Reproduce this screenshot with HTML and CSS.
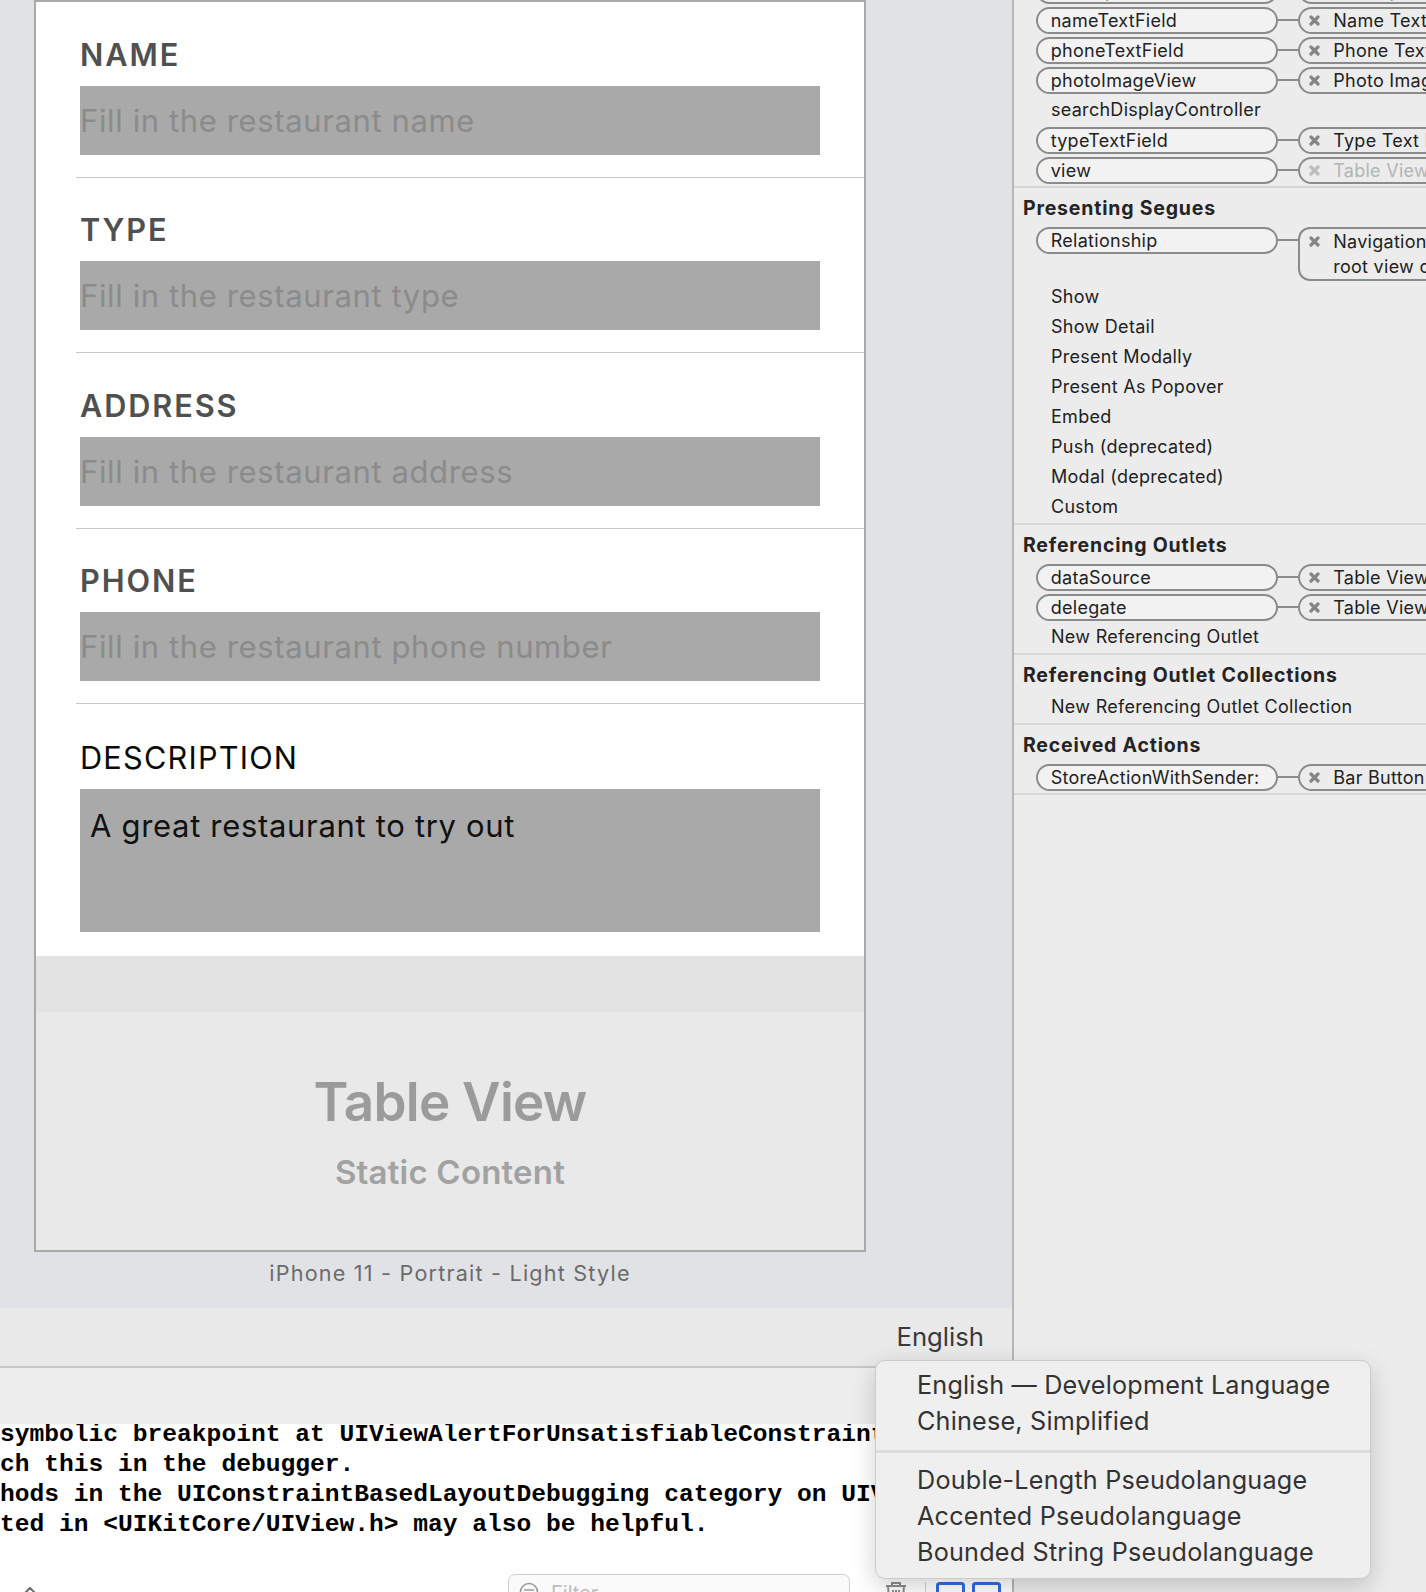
FILE: index.html
```html
<!DOCTYPE html>
<html lang="en">
<head>
<meta charset="utf-8">
<title>Storyboard</title>
<link rel="stylesheet" href="styles.css">
</head>
<body>
<div class="app">
  <div class="editor">
    <div class="canvas">
      <div class="device">
        <div class="form">
          <div class="row">
            <div class="label">NAME</div>
            <div class="field">Fill in the restaurant name</div>
          </div>
          <div class="row">
            <div class="label">TYPE</div>
            <div class="field">Fill in the restaurant type</div>
          </div>
          <div class="row">
            <div class="label">ADDRESS</div>
            <div class="field">Fill in the restaurant address</div>
          </div>
          <div class="row">
            <div class="label">PHONE</div>
            <div class="field">Fill in the restaurant phone number</div>
          </div>
          <div class="row row-desc">
            <div class="label label-dark">DESCRIPTION</div>
            <div class="field field-desc">A great restaurant to try out</div>
          </div>
        </div>
        <div class="band"></div>
        <div class="placeholder">
          <div class="ph-title">Table View</div>
          <div class="ph-sub">Static Content</div>
        </div>
      </div>
      <div class="caption">iPhone 11 - Portrait - Light Style</div>
    </div>
    <div class="langbar"><span class="lang">English</span></div>
    <div class="debugbar"></div>
    <div class="console">
      <pre class="log">symbolic breakpoint at UIViewAlertForUnsatisfiableConstraints to
ch this in the debugger.
hods in the UIConstraintBasedLayoutDebugging category on UIView
ted in &lt;UIKitCore/UIView.h&gt; may also be helpful.</pre>
      <div class="console-bar">
        <svg class="ic-chevron" width="16" height="12" viewBox="0 0 16 12"><path d="M2 9 L8 3 L14 9" fill="none" stroke="#6d6d6d" stroke-width="2" stroke-linecap="round" stroke-linejoin="round"/></svg>
        <div class="filter">
          <svg width="20" height="20" viewBox="0 0 20 20"><circle cx="10" cy="10" r="8.5" fill="none" stroke="#9a9a9a" stroke-width="1.6"/><path d="M5.5 8h9M7 11h6M8.5 14h3" stroke="#9a9a9a" stroke-width="1.6" stroke-linecap="round"/></svg>
          <span class="filter-text">Filter</span>
        </div>
        <svg class="ic-trash" width="26" height="26" viewBox="0 0 26 26" fill="none" stroke="#8d8d8d" stroke-width="2"><path d="M9 4V2h8v2"/><path d="M3 5h20"/><path d="M5 5l1.5 19h13L21 5"/><path d="M10 9v12M13 9v12M16 9v12"/></svg>
        <span class="bar-sep"></span>
        <svg class="ic-split" width="29" height="29" viewBox="0 0 29 29"><rect x="1.5" y="1.5" width="26" height="26" rx="2" fill="#fff" stroke="#2f6be0" stroke-width="3"/></svg>
        <svg class="ic-split2" width="29" height="29" viewBox="0 0 29 29"><rect x="1.5" y="1.5" width="26" height="26" rx="2" fill="#fff" stroke="#2f6be0" stroke-width="3"/></svg>
      </div>
    </div>
  </div>

  <aside class="inspector">
    <div class="outlets">
      <section class="section">
        <div class="conn"><span class="pill">descriptionTextView</span><span class="wire"></span><span class="target"><svg class="x" width="11" height="11" viewBox="0 0 11 11"><path d="M2 2L9 9M9 2L2 9"/></svg><span>Description Text View</span></span></div>
        <div class="conn"><span class="pill">nameTextField</span><span class="wire"></span><span class="target"><svg class="x" width="11" height="11" viewBox="0 0 11 11"><path d="M2 2L9 9M9 2L2 9"/></svg><span>Name Text Field</span></span></div>
        <div class="conn"><span class="pill">phoneTextField</span><span class="wire"></span><span class="target"><svg class="x" width="11" height="11" viewBox="0 0 11 11"><path d="M2 2L9 9M9 2L2 9"/></svg><span>Phone Text Field</span></span></div>
        <div class="conn"><span class="pill">photoImageView</span><span class="wire"></span><span class="target"><svg class="x" width="11" height="11" viewBox="0 0 11 11"><path d="M2 2L9 9M9 2L2 9"/></svg><span>Photo Image View</span></span></div>
        <div class="item">searchDisplayController</div>
        <div class="conn"><span class="pill">typeTextField</span><span class="wire"></span><span class="target"><svg class="x" width="11" height="11" viewBox="0 0 11 11"><path d="M2 2L9 9M9 2L2 9"/></svg><span>Type Text Field</span></span></div>
        <div class="conn"><span class="pill">view</span><span class="wire"></span><span class="target target-off"><svg class="x" width="11" height="11" viewBox="0 0 11 11"><path d="M2 2L9 9M9 2L2 9"/></svg><span>Table View</span></span></div>
      </section>

      <section class="section">
        <h3 class="sec-title">Presenting Segues</h3>
        <div class="conn"><span class="pill">Relationship</span><span class="wire"></span><span class="target target-tall"><svg class="x" width="11" height="11" viewBox="0 0 11 11"><path d="M2 2L9 9M9 2L2 9"/></svg><span class="tall-text"><span>Navigation Controller</span><span>root view controller</span></span></span></div>
        <div class="item">Show</div>
        <div class="item">Show Detail</div>
        <div class="item">Present Modally</div>
        <div class="item">Present As Popover</div>
        <div class="item">Embed</div>
        <div class="item">Push (deprecated)</div>
        <div class="item">Modal (deprecated)</div>
        <div class="item">Custom</div>
      </section>

      <section class="section">
        <h3 class="sec-title">Referencing Outlets</h3>
        <div class="conn"><span class="pill">dataSource</span><span class="wire"></span><span class="target"><svg class="x" width="11" height="11" viewBox="0 0 11 11"><path d="M2 2L9 9M9 2L2 9"/></svg><span>Table View</span></span></div>
        <div class="conn"><span class="pill">delegate</span><span class="wire"></span><span class="target"><svg class="x" width="11" height="11" viewBox="0 0 11 11"><path d="M2 2L9 9M9 2L2 9"/></svg><span>Table View</span></span></div>
        <div class="item">New Referencing Outlet</div>
      </section>

      <section class="section">
        <h3 class="sec-title">Referencing Outlet Collections</h3>
        <div class="item">New Referencing Outlet Collection</div>
      </section>

      <section class="section">
        <h3 class="sec-title">Received Actions</h3>
        <div class="conn"><span class="pill">StoreActionWithSender:</span><span class="wire"></span><span class="target"><svg class="x" width="11" height="11" viewBox="0 0 11 11"><path d="M2 2L9 9M9 2L2 9"/></svg><span>Bar Button Item</span></span></div>
      </section>
    </div>
  </aside>
</div>

<div class="menu">
  <div class="menu-item">English — Development Language</div>
  <div class="menu-item">Chinese, Simplified</div>
  <div class="menu-sep"></div>
  <div class="menu-item">Double-Length Pseudolanguage</div>
  <div class="menu-item">Accented Pseudolanguage</div>
  <div class="menu-item">Bounded String Pseudolanguage</div>
</div>
</body>
</html>
```

FILE: styles.css
```css
* { box-sizing: border-box; margin: 0; padding: 0; }
html, body { width: 1426px; height: 1592px; overflow: hidden; }
body {
  font-family: Inter, "Noto Sans", sans-serif;
  background: #ececec;
  position: relative;
  color: #222;
}

.app { display: flex; height: 1592px; }

/* ---------- editor (left) ---------- */
.editor {
  width: 1012px;
  flex: none;
  display: flex;
  flex-direction: column;
  overflow: hidden;
}
.canvas {
  height: 1308px;
  flex: none;
  background: #e1e2e6;
  padding-left: 34px;
}
.device {
  width: 832px;
  border: 2px solid #a9a9a9;
  background: #e9e9e9;
}
.form { background: #fff; }
.row {
  margin-left: 40px;
  height: 175.5px;
  padding: 32.5px 0 0 4px;
  border-bottom: 1px solid #c8c8c8;
}
.label {
  font-size: 30.7px;
  font-weight: 600;
  letter-spacing: 1.9px;
  line-height: 40px;
  height: 40px;
  color: #505050;
}
.label-dark {
  color: #0a0a0a;
  font-weight: 400;
  letter-spacing: 1.2px;
}
.field {
  width: 740px;
  height: 69px;
  margin-top: 11px;
  background: #a9a9a9;
  font-size: 31px;
  letter-spacing: 0.62px;
  line-height: 69px;
  color: #8b8b8b;
  white-space: nowrap;
}
.row-desc {
  height: 252px;
  padding-top: 34px;
  border-bottom: none;
}
.field-desc {
  height: 143px;
  padding: 17px 0 0 10px;
  line-height: 40px;
  letter-spacing: 0.68px;
  color: #111;
}
.band { height: 56px; background: #e3e3e3; }
.placeholder {
  height: 238px;
  background: #e9e9e9;
  display: flex;
  flex-direction: column;
  align-items: center;
  padding-top: 60px;
}
.ph-title {
  font-size: 53px;
  line-height: 60px;
  font-weight: 600;
  letter-spacing: -0.75px;
  color: #9b9b9b;
}
.ph-sub {
  font-size: 33px;
  line-height: 40px;
  font-weight: 600;
  letter-spacing: 0.2px;
  color: #a2a2a2;
  margin-top: 20px;
}
.caption {
  width: 832px;
  text-align: center;
  font-size: 21.6px;
  letter-spacing: 1.2px;
  line-height: 30px;
  margin-top: 6px;
  color: #6b6b6b;
}

.langbar {
  height: 60px;
  flex: none;
  background: #e9e9e9;
  border-bottom: 2px solid #c6c6c6;
  display: flex;
  justify-content: flex-end;
  align-items: center;
  padding-right: 28px;
}
.lang { font-size: 25.7px; line-height: 30px; color: #3a3a3a; }
.debugbar { height: 56px; flex: none; background: #ededed; }

.console { flex: 1; background: #fff; overflow: hidden; }
.log {
  margin-top: -4px;
  font-family: "Liberation Mono", monospace;
  font-weight: 700;
  font-size: 24.6px;
  line-height: 30px;
  white-space: pre;
  color: #000;
}
.console-bar {
  display: flex;
  align-items: flex-start;
  height: 40px;
  margin-top: 34px;
}
.ic-chevron { margin: 11px 0 0 22px; flex: none; }
.filter {
  margin-left: 470px;
  width: 342px;
  height: 32px;
  flex: none;
  border: 1px solid #d0d0d0;
  border-radius: 7px;
  background: #fafafa;
  display: flex;
  align-items: flex-start;
  padding: 7px 0 0 10px;
  gap: 12px;
}
.filter-text { font-size: 20px; line-height: 22px; color: #bdbdbd; }
.ic-trash { margin: 7px 0 0 33px; flex: none; }
.bar-sep { width: 1px; height: 24px; background: #cfcfcf; margin: 8px 0 0 16px; flex: none; }
.ic-split { margin: 8px 0 0 10px; flex: none; }
.ic-split2 { margin: 8px 0 0 7px; flex: none; }

/* ---------- inspector (right) ---------- */
.inspector {
  flex: 1;
  border-left: 2px solid #b7b7b7;
  background: #ececec;
  overflow: hidden;
}
.outlets { margin-top: -25px; }
.section {
  padding-bottom: 1px;
  border-bottom: 2px solid #d7d7d7;
}
.sec-title {
  height: 37px;
  padding: 4px 0 0 9px;
  line-height: 33px;
  font-size: 19.5px;
  font-weight: 700;
  letter-spacing: 0.8px;
  color: #242424;
  white-space: nowrap;
}
.conn {
  display: flex;
  align-items: flex-start;
  padding: 1.5px 0 1.5px 21.7px;
  font-size: 18px;
  letter-spacing: 0.28px;
  white-space: nowrap;
}
.pill {
  width: 242px;
  height: 27px;
  flex: none;
  border: 2px solid #8b8b8b;
  border-radius: 14px;
  background: #f2f2f2;
  padding-left: 13px;
  line-height: 23px;
  color: #222;
}
.wire {
  width: 20px;
  height: 2px;
  flex: none;
  margin-top: 12.5px;
  background: #8b8b8b;
}
.target {
  width: 200px;
  height: 27px;
  flex: none;
  border: 2px solid #8b8b8b;
  border-right: none;
  border-radius: 14px 0 0 14px;
  padding-left: 9.5px;
  display: flex;
  align-items: center;
  gap: 13px;
  line-height: 23px;
  color: #222;
}
.x { flex: none; }
.x path { stroke: #858585; stroke-width: 3.2; stroke-linecap: round; fill: none; }
.target-off { color: #b4b4b4; }
.target-off .x path { stroke: #bdbdbd; }
.target-tall {
  height: 54px;
  border-radius: 12px 0 0 12px;
  align-items: flex-start;
}
.target-tall .x { margin-top: 7px; }
.tall-text { display: flex; flex-direction: column; line-height: 25px; }
.item {
  height: 30px;
  line-height: 30px;
  padding-left: 37px;
  font-size: 18px;
  letter-spacing: 0.28px;
  color: #222;
  white-space: nowrap;
}

/* ---------- popup menu ---------- */
.menu {
  position: absolute;
  left: 875px;
  top: 1360px;
  width: 496px;
  height: 219px;
  background: #efefef;
  border: 1px solid #cbcbcb;
  border-radius: 10px;
  box-shadow: 0 8px 24px rgba(0, 0, 0, 0.18);
  padding-top: 6px;
}
.menu-item {
  padding-left: 41px;
  font-size: 25.2px;
  letter-spacing: 0.2px;
  line-height: 36px;
  color: #333;
  white-space: nowrap;
}
.menu-sep { height: 3px; background: #dcdcdc; margin: 11px 0 9px; }
```
